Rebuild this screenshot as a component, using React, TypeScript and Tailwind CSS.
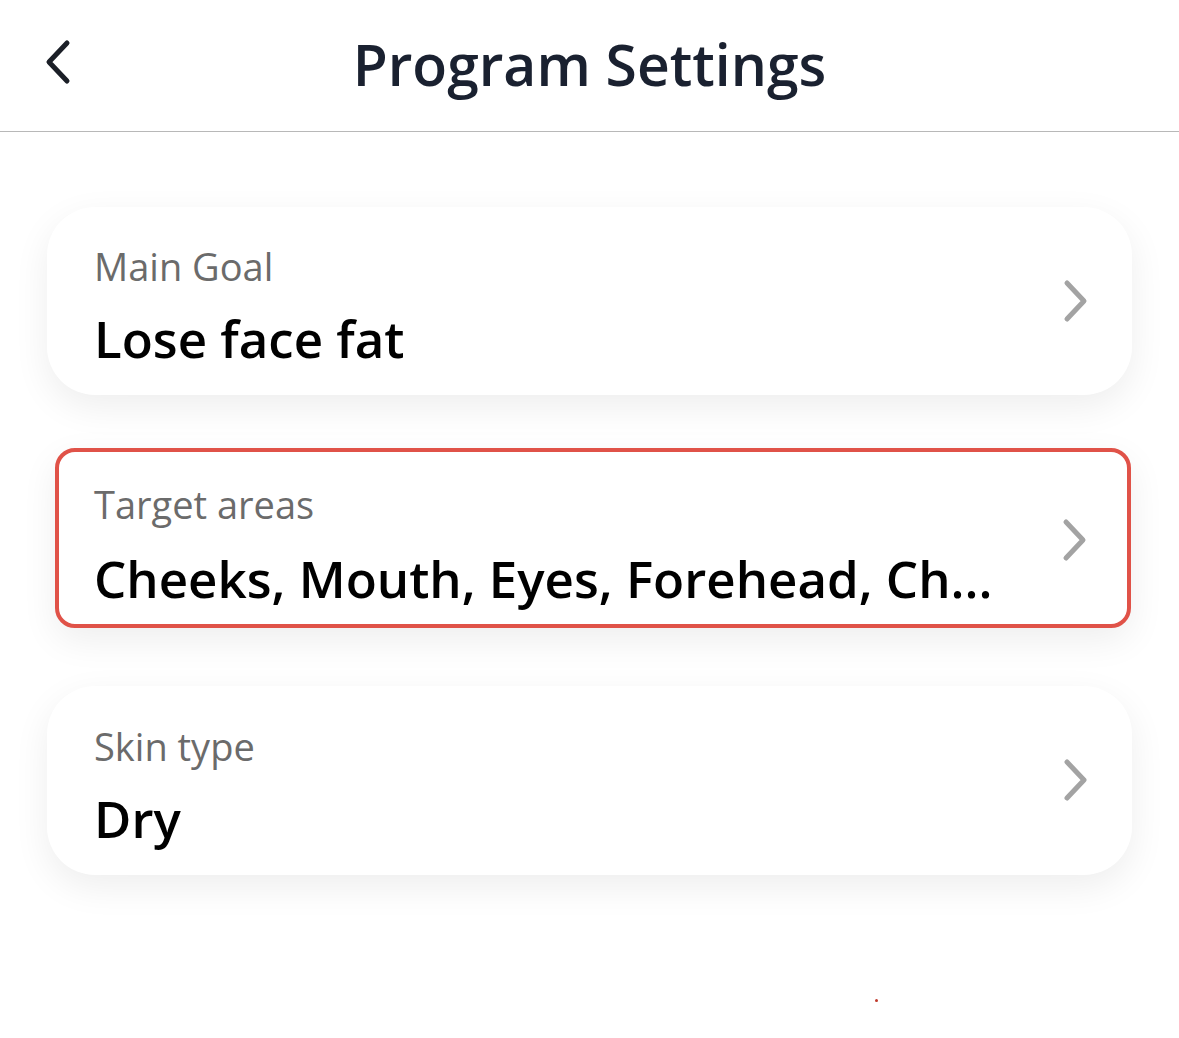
import React from "react";

const Chevron = ({ className }: { className: string }) => (
  <svg width="28" height="44" viewBox="0 0 28 44" fill="none" className={`shrink-0 ${className}`}>
    <path d="M5 4 L22 22 L5 40" stroke="#a3a3a3" strokeWidth="5" strokeLinecap="round" strokeLinejoin="round" />
  </svg>
);

function Card({
  label,
  value,
  className,
  gapClass,
  chevronClass,
}: {
  label: string;
  value: string;
  className: string;
  gapClass: string;
  chevronClass: string;
}) {
  return (
    <div className={className}>
      <div className="flex-1 min-w-0">
        <div className="text-[38px] leading-[46px] text-[#6b6b6b] whitespace-nowrap">{label}</div>
        <div className={`${gapClass} text-[51px] leading-[60px] font-semibold text-black whitespace-nowrap`}>{value}</div>
      </div>
      <Chevron className={chevronClass} />
    </div>
  );
}

export default function App() {
  return (
    <div className="relative w-[1179px] h-[1038px] bg-white overflow-hidden" style={{ fontFamily: '"Open Sans", sans-serif' }}>
      <div className="relative h-[132px] border-b-[1.5px] border-[#b8b8b8] flex items-center justify-center">
        <svg width="30" height="46" viewBox="0 0 30 46" fill="none" className="absolute left-[43px] top-[39px]">
          <path d="M24 4 L6 23 L24 42" stroke="#1b1f27" strokeWidth="5" strokeLinecap="round" strokeLinejoin="round" />
        </svg>
        <div className="text-[57px] leading-[70px] font-semibold text-[#1a2130] -mt-[4px]">Program Settings</div>
      </div>
      <div className="flex flex-col pl-[47px] pr-[47px]">
        <Card
          label="Main Goal"
          value="Lose face fat"
          gapClass="mt-[19px]"
          chevronClass="-mt-[8px]"
          className="mt-[75px] h-[188px] flex items-center pl-[47px] pr-[42px] pt-[8px] bg-white rounded-[48px] shadow-[0_12px_36px_rgba(0,0,0,0.07)]"
        />
        <Card
          label="Target areas"
          value="Cheeks, Mouth, Eyes, Forehead, Ch..."
          gapClass="mt-[21px]"
          chevronClass="-mt-[8px]"
          className="mt-[53px] ml-[8px] mr-[1px] h-[180px] flex items-center pl-[35px] pr-[38px] pt-[12px] bg-white rounded-[20px] border-[4px] border-[#e05248] shadow-[0_12px_36px_rgba(0,0,0,0.07)]"
        />
        <Card
          label="Skin type"
          value="Dry"
          gapClass="mt-[19px]"
          chevronClass="-mt-[10px]"
          className="mt-[58px] h-[189px] flex items-center pl-[47px] pr-[42px] pt-[9px] bg-white rounded-[48px] shadow-[0_12px_36px_rgba(0,0,0,0.07)]"
        />
      </div>
      <div className="absolute left-[875px] top-[999px] w-[3px] h-[3px] rounded-full bg-[#c0392b]" />
    </div>
  );
}
